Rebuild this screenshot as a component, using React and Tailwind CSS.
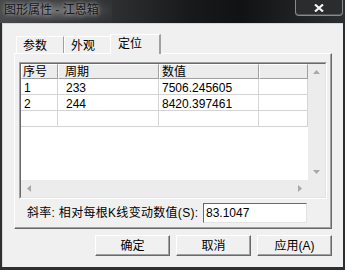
import React from "react";

const rows = [
	["1", "233", "7506.245605"],
	["2", "244", "8420.397461"],
	["", "", ""],
];

function Arrow({ dir }) {
	const pts = {
		up: "0,4 3.5,0 7,4",
		down: "0,0 3.5,4 7,0",
		left: "4,0 0,3.5 4,7",
		right: "0,0 4,3.5 0,7",
	}[dir];
	const vertical = dir === "up" || dir === "down";
	return (
		<svg width={vertical ? 7 : 4} height={vertical ? 4 : 7}>
			<polygon points={pts} fill="#a8a8a8" />
		</svg>
	);
}

function Tab({ label, selected, pad }) {
	if (selected) {
		return (
			<div className="relative z-10 -ml-[2px] -mb-px h-[20px] w-[51px] bg-[#f0f0f0] border-t border-l border-white border-r-2 border-r-[#a0a0a0] flex items-start">
				<span className={`pt-[3px] ${pad}`}>{label}</span>
			</div>
		);
	}
	return (
		<div className="h-[17px] w-[48px] border-t border-l border-white border-r border-r-[#a0a0a0] shadow-[1px_0_0_#696969] flex items-start">
			<span className={`pt-[3px] ${pad}`}>{label}</span>
		</div>
	);
}

function Btn({ children }) {
	return (
		<div className="w-[75px] h-[21px] flex items-center justify-center border-t border-l border-white border-r border-b border-r-[#696969] border-b-[#696969] shadow-[inset_-1px_-1px_0_#a0a0a0] text-[#000]">
			{children}
		</div>
	);
}

export default function App() {
	return (
		<div className="w-[345px] h-[270px] overflow-hidden flex flex-col bg-[#2c2e30] font-['Liberation_Sans','Noto_Sans_CJK_SC',sans-serif] text-[12px] leading-none text-black">
			{/* title bar */}
			<div className="relative h-[23px] shrink-0 bg-[linear-gradient(90deg,#48494b_0%,#333436_28%,#17191b_55%,#101214_70%,#2c2e30_100%)]">
				<div className="absolute left-0 top-0 w-[112px] h-[21px] bg-[radial-gradient(ellipse_at_center,rgba(150,150,150,0.55),rgba(90,90,90,0.15)_70%,transparent_100%)]"></div>
				<div className="absolute left-[4px] top-[4px] text-[12px] text-[#161622] [text-shadow:0_0_4px_rgba(220,220,220,0.9)]">
					图形属性 - 江恩箱
				</div>
				<div className="absolute right-[2px] top-0 w-[48px] h-[16px] rounded-b-[4px] border border-t-0 border-[#8a8a8a] bg-[#2a2c2e] shadow-[inset_0_-1px_0_#555] flex items-center justify-center">
					<svg width="10" height="8" viewBox="0 0 10 8">
						<path d="M1 0.5 L9 7.5 M9 0.5 L1 7.5" stroke="#f4f4f4" strokeWidth="2.2" />
					</svg>
				</div>
			</div>

			{/* client area */}
			<div className="ml-[2px] w-[341px] h-[244px] shrink-0 bg-[#f0f0f0] border-t border-l border-[#d8d8d8] flex flex-col">
				{/* tabs */}
				<div className="mt-[10px] ml-[13px] h-[19px] flex items-end">
					<Tab label="参数" pad="pl-[6px]" />
					<Tab label="外观" pad="pl-[6px]" />
					<Tab label="定位" selected pad="pl-[7px]" />
				</div>

				{/* tab panel */}
				<div className="ml-[11px] w-[318px] h-[176px] border-t border-l border-white border-r border-b border-r-[#696969] border-b-[#696969] shadow-[inset_-1px_-1px_0_#a0a0a0] flex flex-col">
					{/* list view */}
					<div className="ml-[4px] mt-[8px] w-[308px] h-[137px] border border-t-[#a0a0a0] border-l-[#a0a0a0] border-r-white border-b-white">
						<div className="w-full h-full border border-t-[#696969] border-l-[#696969] border-r-[#e3e3e3] border-b-[#e3e3e3] bg-white flex">
							<div className="w-[287px] flex flex-col">
								<div className="flex-1">
									{/* header */}
									<div className="flex h-[15px]">
										<div className="w-[37px] bg-[#ececec] border-t border-l border-white border-r border-b border-r-[#a0a0a0] border-b-[#a0a0a0] pl-[1px] pt-[1px]">序号</div>
										<div className="w-[101px] bg-[#ececec] border-t border-l border-white border-r border-b border-r-[#a0a0a0] border-b-[#a0a0a0] pl-[6px] pt-[1px]">周期</div>
										<div className="w-[100px] bg-[#ececec] border-t border-l border-white border-r border-b border-r-[#a0a0a0] border-b-[#a0a0a0] pl-[2px] pt-[1px]">数值</div>
										<div className="w-[49px] bg-[#ececec] border-t border-l border-white border-r border-b border-r-[#a0a0a0] border-b-[#a0a0a0]"></div>
									</div>
									{rows.map((r, i) => (
										<div key={i} className="flex h-[16px] border-b border-[#d4d4d4]">
											<div className="w-[37px] border-r border-[#d4d4d4] pl-[3px] pt-[3px]">{r[0]}</div>
											<div className="w-[101px] border-r border-[#d4d4d4] pl-[8px] pt-[3px]">{r[1]}</div>
											<div className="w-[100px] border-r border-[#d4d4d4] pl-[3px] pt-[3px]">{r[2]}</div>
											<div className="w-[49px] border-r border-[#d4d4d4]"></div>
										</div>
									))}
								</div>
								{/* horizontal scrollbar */}
								<div className="h-[17px] bg-[#ececec] flex items-center justify-between px-[6px]">
									<Arrow dir="left" />
									<Arrow dir="right" />
								</div>
							</div>
							{/* vertical scrollbar */}
							<div className="w-[17px] flex flex-col bg-[#ececec]">
								<div className="flex-1 flex flex-col items-center justify-between pt-[6px] pb-[6px]">
									<Arrow dir="up" />
									<Arrow dir="down" />
								</div>
								<div className="h-[17px] bg-[#ececec]"></div>
							</div>
						</div>
					</div>

					{/* slope row */}
					<div className="mt-[4px] flex items-center">
						<span className="ml-[12px] w-[176px] whitespace-nowrap tracking-[0.3px]">斜率: 相对每根K线变动数值(S):</span>
						<div className="w-[104px] h-[20px] bg-white border border-t-[#696969] border-l-[#696969] border-r-[#e3e3e3] border-b-[#e3e3e3] pl-[2px] pt-[3px]">
							83.1047
						</div>
					</div>
				</div>

				{/* buttons */}
				<div className="ml-[11px] w-[318px] mt-[6px] flex justify-end gap-[6px]">
					<Btn>确定</Btn>
					<Btn>取消</Btn>
					<Btn>应用(A)</Btn>
				</div>
			</div>
		</div>
	);
}
